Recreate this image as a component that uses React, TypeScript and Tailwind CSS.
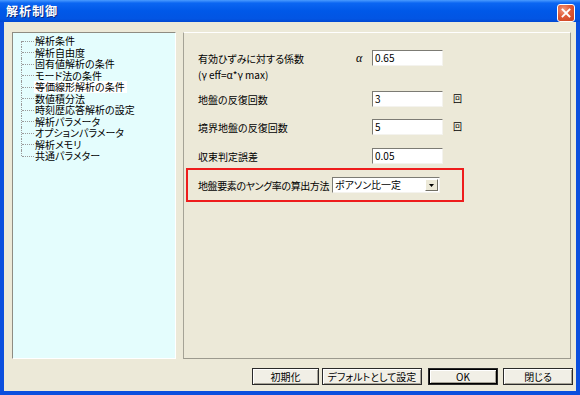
import React from "react";

const font = "font-['MS_UI_Gothic','Noto_Sans_CJK_JP',sans-serif] [font-feature-settings:'palt']";

const treeItems = [
	"解析条件",
	"解析自由度",
	"固有値解析の条件",
	"モード法の条件",
	"等価線形解析の条件",
	"数値積分法",
	"時刻歴応答解析の設定",
	"解析パラメータ",
	"オプションパラメータ",
	"解析メモリ",
	"共通パラメター",
];

const TextBox: React.FC<{ value: string }> = ({ value }) => (
	<div className="w-[71px] h-[16px] bg-white border border-t-[#7c7b74] border-l-[#7c7b74] border-b-[#f4f3ee] border-r-[#f4f3ee] text-[10px] leading-[14px] pl-[2px] text-black">
		{value}
	</div>
);

const Button: React.FC<{ label: string; className: string; primary?: boolean }> = ({
	label,
	className,
	primary,
}) => (
	<div
		className={`${className} h-[17px] flex items-center justify-center bg-[#f1efe6] border border-[#2a2a2a] text-[10px] leading-[12px] text-black ${
			primary
				? "shadow-[inset_0_0_0_1px_#000,inset_2px_2px_0_#fff,inset_-2px_-2px_0_#a6a397]"
				: "shadow-[inset_1px_1px_0_#fff,inset_-1px_-1px_0_#a6a397]"
		}`}
	>
		{label}
	</div>
);

export default function App() {
	return (
		<div className={`w-[580px] h-[395px] flex flex-col bg-[#0b4fde] ${font}`}>
			{/* Title bar */}
			<div className="h-[22px] flex items-center justify-between pl-[6px] pr-[5px] bg-[linear-gradient(to_bottom,#4a9bff_0%,#0b66f2_14%,#0058e8_50%,#0255e3_85%,#0148d2_100%)]">
				<span className="text-white text-[12px] font-bold tracking-[1px] [text-shadow:1px_1px_0_#0a2a80]">
					解析制御
				</span>
				<div className="w-[18px] h-[18px] mt-[3px] rounded-[3px] border border-white bg-[radial-gradient(circle_at_35%_30%,#f19a80_0%,#e05a36_45%,#c8401e_100%)] flex items-center justify-center">
					<svg width="10" height="10" viewBox="0 0 10 10">
						<path d="M1.5 1.5 L8.5 8.5 M8.5 1.5 L1.5 8.5" stroke="#fff" strokeWidth="1.8" strokeLinecap="square" />
					</svg>
				</div>
			</div>

			{/* Client area */}
			<div className="flex-1 mx-[4px] mb-[4px] bg-[#ece9d8] flex flex-col pl-[8px] pr-[3px] pt-[10px]">
				<div className="flex gap-[7px] h-[327px] mr-[2px]">
					{/* Tree */}
					<div className="w-[164px] bg-[#e4fdfd] border border-t-[#8e8c82] border-l-[#8e8c82] border-b-white border-r-white pl-[8px] pt-[2px]">
						{treeItems.map((item, i) => (
							<div key={item} className="flex h-[11.5px] items-center">
								<div className="relative w-[13px] h-full shrink-0">
									<div
										className={`absolute left-0 w-0 border-l border-dotted border-[#9a9a9a] ${
											i === 0 ? "top-1/2 bottom-0" : i === treeItems.length - 1 ? "top-0 h-1/2" : "top-0 bottom-0"
										}`}
									/>
									<div className="absolute left-[1px] right-0 top-1/2 border-t border-dotted border-[#9a9a9a]" />
								</div>
								<span
									className={`text-[10px] leading-[11.5px] text-black whitespace-nowrap pl-[1px] pr-[2px] ${
										item === "等価線形解析の条件" ? "bg-white" : ""
									}`}
								>
									{item}
								</span>
							</div>
						))}
					</div>

					{/* Settings panel */}
					<div className="flex-1 border border-t-white border-l-[#a5a396] border-r-[#9c9a8e] border-b-[#9c9a8e] pl-[2px] pt-[17px] text-[10px] text-black">
						<div className="flex items-center h-[16px] pl-[12px]">
							<span className="w-[158px]">有効ひずみに対する係数</span>
							<span className="w-[16px] italic font-['Liberation_Serif',serif] text-[12px]">α</span>
							<TextBox value="0.65" />
						</div>
						<div className="flex items-center h-[16px] pl-[12px]">
							<span>(γ eff=α*γ max)</span>
						</div>
						<div className="flex items-center h-[16px] pl-[12px] mt-[9px]">
							<span className="w-[174px]">地盤の反復回数</span>
							<TextBox value="3" />
							<span className="ml-[10px] text-[9px]">回</span>
						</div>
						<div className="flex items-center h-[16px] pl-[12px] mt-[12px]">
							<span className="w-[174px]">境界地盤の反復回数</span>
							<TextBox value="5" />
							<span className="ml-[10px] text-[9px]">回</span>
						</div>
						<div className="flex items-center h-[16px] pl-[12px] mt-[13px]">
							<span className="w-[174px]">収束判定誤差</span>
							<TextBox value="0.05" />
						</div>
						<div className="w-[278px] h-[34px] mt-[4px] border-2 border-[#ee1c1c] flex items-center pl-[10px]">
							<span className="w-[134px] whitespace-nowrap tracking-[-0.4px]">地盤要素のヤング率の算出方法</span>
							<div className="w-[108px] h-[16px] bg-white border border-t-[#7c7b74] border-l-[#7c7b74] border-b-[#f4f3ee] border-r-[#f4f3ee] flex items-center justify-between pl-[2px] pr-[1px]">
								<span className="leading-[14px]">ポアソン比一定</span>
								<div className="w-[13px] h-[12px] bg-[#ece9d8] border border-t-white border-l-white border-b-[#716f64] border-r-[#716f64] flex items-center justify-center">
									<svg width="5" height="3" viewBox="0 0 5 3">
										<path d="M0 0 H5 L2.5 3 Z" fill="#000" />
									</svg>
								</div>
							</div>
						</div>
					</div>
				</div>

				{/* Buttons */}
				<div className="flex justify-end items-center mt-[9px]">
					<Button label="初期化" className="w-[67px]" />
					<Button label="デフォルトとして設定" className="w-[100px] ml-[3px]" />
					<Button label="OK" className="w-[70px] ml-[6px]" primary />
					<Button label="閉じる" className="w-[70px] ml-[5px]" />
				</div>
			</div>
		</div>
	);
}
